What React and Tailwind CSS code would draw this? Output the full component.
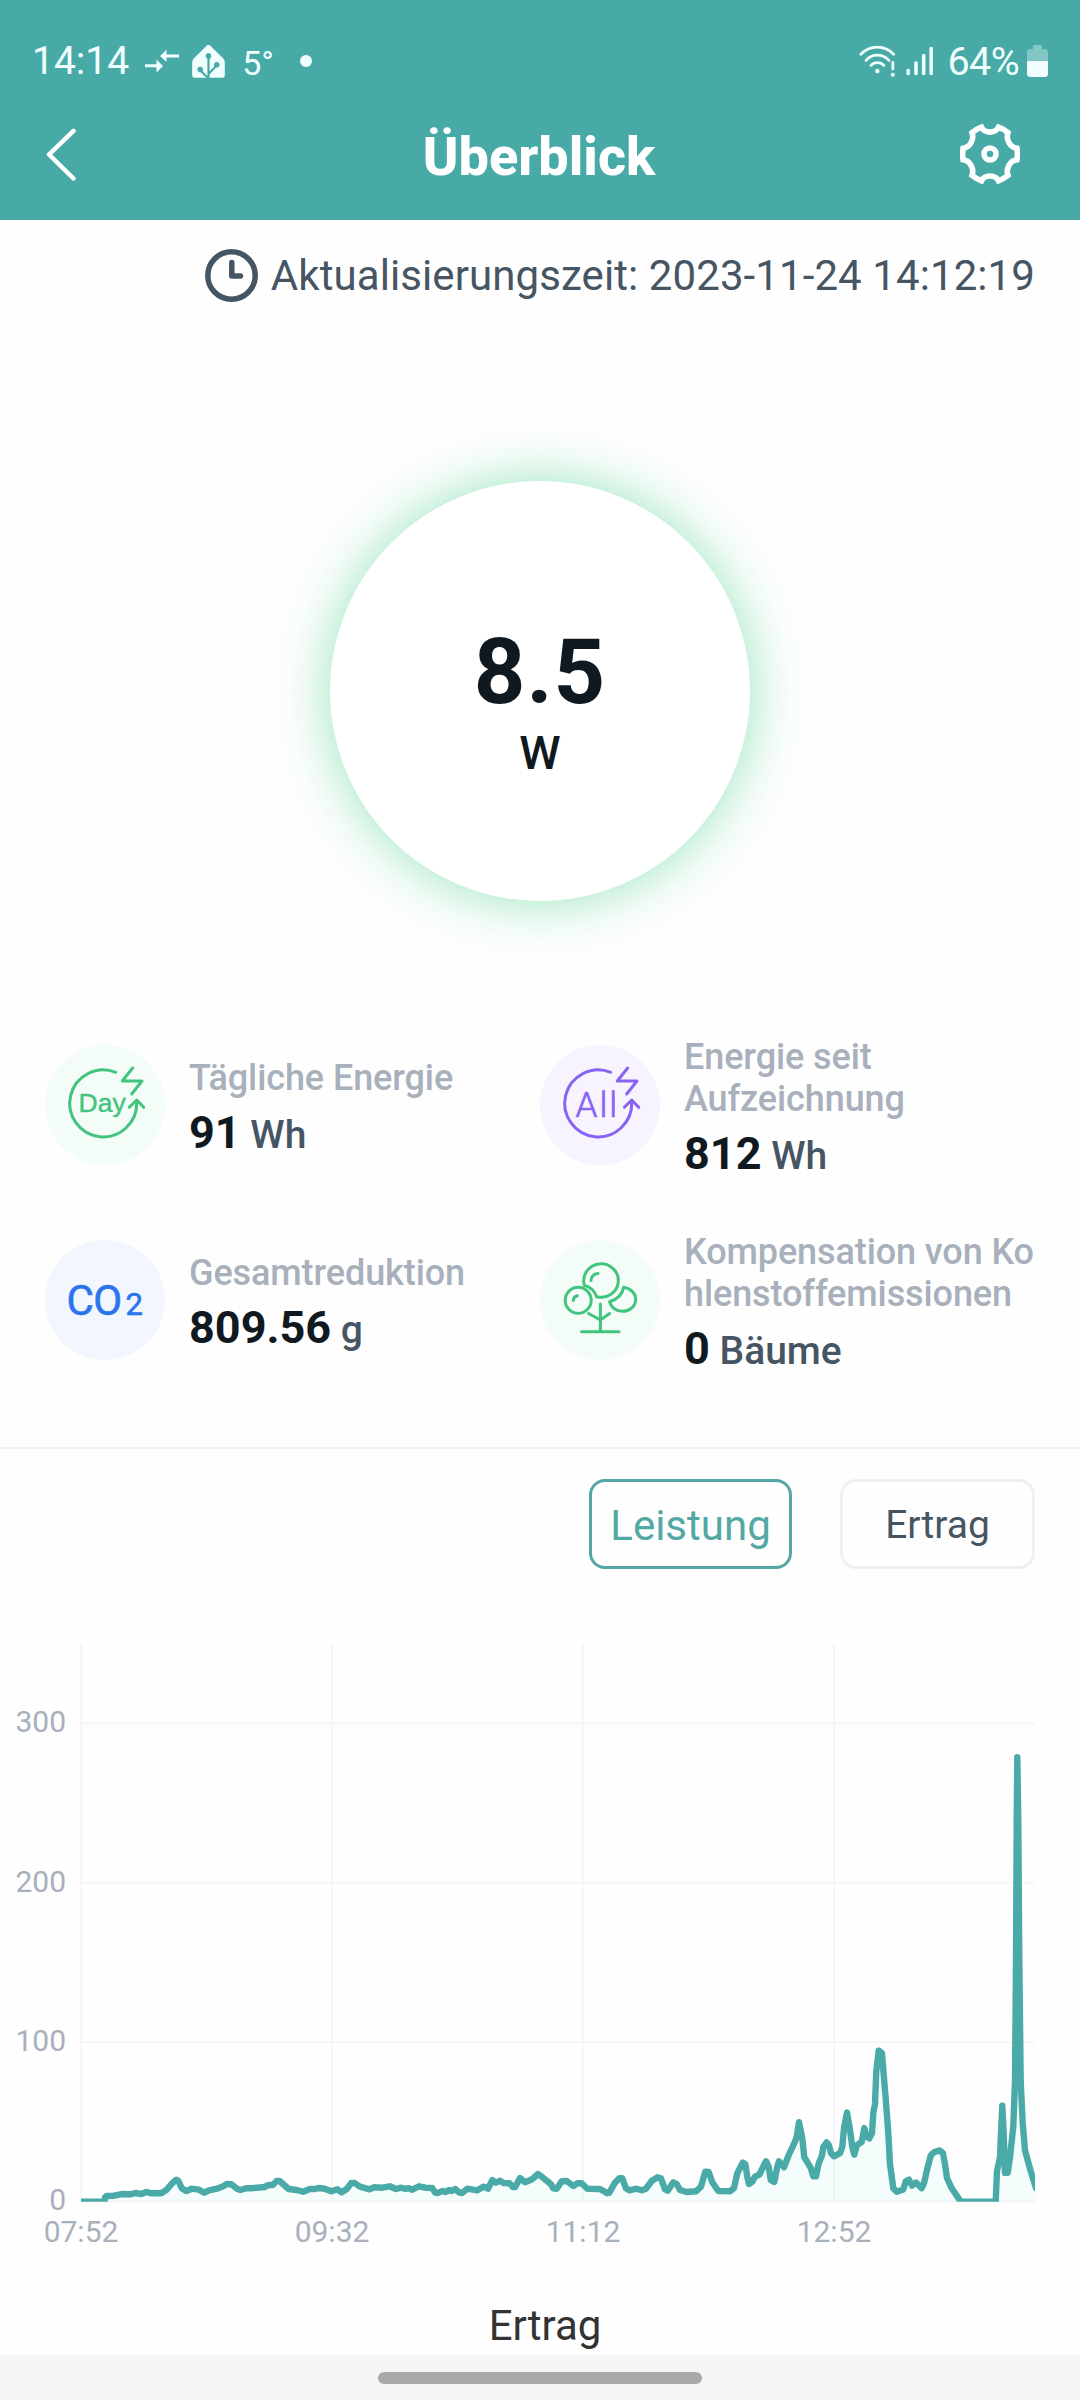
/**
 * Solar overview screen
 *
 * Current power, energy totals and the power curve of the day.
 */

const STATS = [
  {
    id: "daily",
    label: "Tägliche Energie",
    value: "91",
    unit: "Wh",
    bg: "bg-[#f3fcf7]",
    icon: <DayIcon />,
  },
  {
    id: "total",
    label: "Energie seit\nAufzeichnung",
    value: "812",
    unit: "Wh",
    bg: "bg-[#f7f4ff]",
    icon: <AllIcon />,
  },
  {
    id: "co2",
    label: "Gesamtreduktion",
    value: "809.56",
    unit: "g",
    bg: "bg-[#f1f6ff]",
    icon: <Co2Icon />,
  },
  {
    id: "trees",
    label: "Kompensation von Ko\nhlenstoffemissionen",
    value: "0",
    unit: "Bäume",
    bg: "bg-[#f3fcf7]",
    icon: <TreeIcon />,
  },
];

// ===== CHART DATA =====
const Y_TICKS = [
  { label: "300", y: 103.4 },
  { label: "200", y: 262.8 },
  { label: "100", y: 422.2 },
  { label: "0", y: 581.5 },
];

const X_TICKS = [
  { label: "07:52", x: 81 },
  { label: "09:32", x: 332 },
  { label: "11:12", x: 583 },
  { label: "12:52", x: 834 },
];

const POWER_LINE =
  "81,581.7 104.5,581.7 105,577.5 106.7,576 113.6,575.7 123,574 131,574.3 135.3,573 141.2,574 146.3,572 151.5,573.3 161.2,573.3 " +
  "166,570.3 172.2,563.3 176.3,559.7 178.4,561 181.8,568.3 186.3,571 191.5,568.7 199,569.7 204.2,572.7 209,570.3 " +
  "217,568.7 223.8,566 226.6,564 231.4,564.3 237,568.7 240.4,570 246.2,568.3 251.4,568.3 264.5,567 268.6,565 273,565 " +
  "276.5,561 279.6,561 288.6,569 296.8,570 303,571.7 310,569 315,569 318.5,568 324.7,568.7 331.3,571.3 337.5,569.3 " +
  "341.6,572.3 347.1,568.7 351.2,563 354.7,563 358.8,566 363.3,567.7 369.5,569.3 374.3,567.3 382.2,567.7 389.8,566.3 " +
  "396,569 401.2,567.7 404.6,568.7 409,568.3 412.2,569.7 419,566.3 425.3,567.7 432.2,568 435.3,572.7 437.3,573 " +
  "442.5,571 445.2,572 449.4,570 451.8,571 455.2,569 459.7,572.7 462,573 467.3,568.7 477,570.3 483.8,566.7 488,568.7 " +
  "492.4,560 495.9,562.7 500.3,560.7 503.4,563 509.6,563.3 513,567 515.2,567 520,558 525.1,562.3 532,559.3 538,554 " +
  "541.7,556.7 546.7,560.7 551,564.3 553.3,568.3 556.7,568.7 561.7,561.3 566.7,561 573.3,566 577.3,563.3 581.7,563.3 " +
  "587.3,568.7 600,569 607.3,573.3 609.3,572.7 615,562.7 619.3,558.3 622.3,558.3 626,568.3 629.3,570.3 636.7,568.7 " +
  "641.7,570.3 646,568.7 651.7,561 657.3,557.3 661,558.3 665,569.3 667.7,570.7 673.3,562.3 676.7,564 680,570 686.7,572 " +
  "696,571.3 701,566.7 705.3,551.7 708.7,552 712.3,562.3 718.3,571 730,571.3 734,568 737.3,553.3 742.7,542.7 745.3,544 " +
  "747.3,556.7 749,564 752.3,561.7 755,556.7 759.3,554.7 766,541.3 768.7,546.7 770.7,560 774.3,562 777.3,546.7 779,541.3 " +
  "784,547.3 788.3,536 795,521.7 796.7,516.7 799,502.2 802.3,518.4 804.3,537.3 810.7,547.7 813.3,556.3 816,556.3 " +
  "818.7,543.5 822,535.6 823.3,527 826.7,522.5 829,525.3 831,533.2 834,536.3 840,533.2 842.3,527 844,508.1 847,492.6 " +
  "850,509.8 852.3,527 854.3,534.6 856.7,525.3 861.7,521.8 864.3,508.1 866.7,516.7 869.3,518.4 872,513.2 873.3,492.6 " +
  "875,484 876.3,451.2 878.7,430.6 882,433.3 883.7,454.7 886,482.2 888.3,513.2 890,544.2 893.3,568.3 896.7,571.8 " +
  "903.3,569.4 905.7,561.4 909,559.7 912,565.6 916,562.5 921.7,568.3 924,563.2 926.7,551.1 930.7,535.6 934,532.2 " +
  "939.7,530.4 943,533.2 945,544.2 947,558 951.7,568.3 959.3,579.4 960,581.7 995.7,581.7 997,551.1 1000,537.3 " +
  "1001,513.2 1002.3,485.7 1003.7,513.2 1005,552.8 1007.7,552.8 1010,537.3 1013.3,506.3 1015,461.6 1016,341 " +
  "1016.7,203.3 1017.3,137.2 1018.3,203.3 1019.3,341 1020.7,461.6 1022.7,502.9 1025,530.4 1030.7,551.1 1036,568";

// ===== STATUS BAR ICONS =====
function ArrowsIcon() {
  return (
    <svg className="ml-4 h-6 w-[34px]" viewBox="0 0 34 24" fill="currentColor">
      <path d="M15 7 21.500.8V5.400H34v3H21.500V13zM0 15.200h11.500V10.600L18 17l-6.500 6.400V18.200H0z" />
    </svg>
  );
}

function HouseIcon() {
  return (
    <svg className="ml-[13px] h-[33px] w-[33px]" viewBox="0 0 33 33">
      <path
        fill="currentColor"
        d="M14.400.9a3 3 0 0 1 4.200 0L31.300 13.600a5 5 0 0 1 1.500 3.600V30.400a2.400 2.400 0 0 1-2.400 2.400H2.600A2.400 2.400 0 0 1 .2 30.400V17.200a5 5 0 0 1 1.500-3.600z"
      />
      <g fill="#48aaa7" stroke="#48aaa7">
        <path fill="none" strokeWidth="2.200" d="M16.500 11v22M16.500 29l8-8.500M16 33 8.500 25.500" />
        <circle cx="16.500" cy="11" r="2.400" />
        <circle cx="24.800" cy="19.800" r="2.400" />
        <circle cx="8.200" cy="24.500" r="2.400" />
      </g>
    </svg>
  );
}

function WifiIcon() {
  return (
    <svg className="h-[34px] w-[37px]" viewBox="0 0 37 34" fill="none" stroke="currentColor" strokeLinecap="round">
      <g strokeWidth="2.800">
        <path d="M1.800 10.300C10.500.6 26 .6 34.700 10.300" />
        <path d="M7 16.400C13 9.400 23.500 9.400 30 16.400" />
        <path d="M12 21.400c3.500-3.700 9.300-3.700 12.800 0" />
        <path d="M33.800 18.500v6.500" />
      </g>
      <circle cx="18.300" cy="27" r="2.200" fill="currentColor" stroke="none" />
      <circle cx="33.800" cy="30.800" r="2" fill="currentColor" stroke="none" />
    </svg>
  );
}

function SignalIcon() {
  return (
    <svg
      className="ml-2.5 h-[31px] w-[27px]"
      viewBox="0 0 27 31"
      stroke="currentColor"
      strokeWidth="3.600"
      strokeLinecap="round"
    >
      <path d="M2.200 24.500v3M10 17v10.500M17.700 9.500v18M25.200 2.500v25" />
    </svg>
  );
}

function BatteryIcon() {
  return (
    <svg className="ml-2 h-8 w-[21px]" viewBox="0 0 21 32" fill="currentColor">
      <path
        opacity=".35"
        d="M6 1.500A1.500 1.500 0 0 1 7.500 0h6A1.500 1.500 0 0 1 15 1.500V4h2.500A3.500 3.500 0 0 1 21 7.500V16H0V7.500A3.500 3.500 0 0 1 3.500 4H6z"
      />
      <path d="M0 16h21v12.500a3.500 3.500 0 0 1-3.500 3.500h-14A3.500 3.500 0 0 1 0 28.500z" />
    </svg>
  );
}

// ===== HEADER ICONS =====
function BackIcon() {
  return (
    <svg
      className="h-[53px] w-[30px]"
      viewBox="0 0 30 53"
      fill="none"
      stroke="currentColor"
      strokeWidth="4.500"
      strokeLinecap="round"
      strokeLinejoin="round"
    >
      <path d="M27.500 2.800 3 26.500 27.500 50.500" />
    </svg>
  );
}

function GearIcon() {
  return (
    <svg className="h-[60px] w-[60px]" viewBox="0 0 60 60" fill="none" stroke="currentColor" strokeWidth="5.600">
      <path d="M21.500 3.200C24.500 9.700 35.500 9.700 38.500 3.200Q43.500 5 48 8.600C45.500 15.500 50 23.500 56.900 24.300Q57.900 30 56.900 35.700C50 36.500 45.500 44.500 48 51.400Q43.500 55 38.500 56.800C35.500 50.300 24.500 50.300 21.500 56.800Q16.500 55 12 51.400C14.500 44.500 10 36.500 3.100 35.700Q2.100 30 3.100 24.300C10 23.500 14.500 15.500 12 8.600Q16.500 5 21.500 3.200Z" />
      <circle cx="30" cy="30" r="6" />
    </svg>
  );
}

function ClockIcon() {
  return (
    <svg
      className="h-[53px] w-[53px]"
      viewBox="0 0 53 53"
      fill="none"
      stroke="currentColor"
      strokeWidth="5.500"
      strokeLinecap="round"
      strokeLinejoin="round"
    >
      <circle cx="26.500" cy="26.500" r="23.700" />
      <path strokeWidth="5.500" d="M26.800 13.500V27H35.500" />
    </svg>
  );
}

// ===== STAT ICONS =====
function CycleArrow() {
  return (
    <g fill="none" stroke="currentColor" strokeWidth="3" strokeLinecap="round" strokeLinejoin="round">
      <path d="M70.700 27.300A33.500 33.500 0 1 0 91.700 57" />
      <path d="M84.300 62.300 91.700 55l7 7.300" />
      <path d="M87.700 23 77.300 36H97L86.700 49" />
    </g>
  );
}

function DayIcon() {
  return (
    <svg className="h-full w-full text-[#42c47f]" viewBox="0 0 120 120">
      <CycleArrow />
      <text
        x="33.500"
        y="67"
        fill="currentColor"
        stroke="currentColor"
        strokeWidth=".4"
        className="font-['Liberation_Sans',sans-serif] text-[26.5px]"
      >
        Day
      </text>
    </svg>
  );
}

function AllIcon() {
  return (
    <svg className="h-full w-full text-[#8a63f4]" viewBox="0 0 120 120">
      <CycleArrow />
      <text
        x="35.500"
        y="71.500"
        fill="currentColor"
        stroke="currentColor"
        strokeWidth=".7"
        className="text-[35px] font-light tracking-[2px]"
      >
        All
      </text>
    </svg>
  );
}

function Co2Icon() {
  return (
    <svg className="h-full w-full text-[#2a75ec]" viewBox="0 0 120 120" fill="currentColor">
      <g stroke="currentColor" strokeWidth=".6">
        <text x="21.500" y="74.500" className="text-[42px] tracking-[-0.5px]">
          CO
        </text>
        <text x="80.500" y="74.500" className="text-[31px]">
          2
        </text>
      </g>
    </svg>
  );
}

function TreeIcon() {
  return (
    <svg
      className="h-full w-full text-[#42c47f]"
      viewBox="0 0 120 120"
      fill="none"
      stroke="currentColor"
      strokeWidth="3"
      strokeLinecap="round"
      strokeLinejoin="round"
    >
      <path d="M44.500 45.500A17.300 16.700 0 1 1 56.500 56.700C55 51.500 50.500 46.500 44.500 45.500Z" />
      <circle cx="38.200" cy="60.300" r="13" />
      <path d="M83.600 47.300C91 48.500 95.700 53.500 95.700 59.300C95.700 66.500 89.500 71.300 82.500 71.300C76.500 71.300 71 67.500 69.600 61.700C77 59.500 82.500 54.500 83.600 47.300Z" />
      <path d="M51 40.500c.3-3.800 3-6.600 7-7M33.300 60.500c.2-2.500 1.700-4.300 4-4.800" />
      <path d="M60.400 64v27.700M41.500 91.700H79M48.600 73.500 60.400 80l9.200-6.500" />
    </svg>
  );
}

// ===== SECTIONS =====
function StatusBar() {
  return (
    <div className="flex h-[122px] items-center pl-8 pr-8 text-[#f0fffd]">
      <span className="pt-px text-[39px]">14:14</span>
      <ArrowsIcon />
      <HouseIcon />
      <span className="ml-[17px] pt-1 text-[34px]">5°</span>
      <span className="ml-[26px] h-3 w-3 rounded-full bg-current" />
      <div className="ml-auto flex items-center">
        <WifiIcon />
        <SignalIcon />
        <span className="ml-3.5 pt-px text-[39.5px] tracking-[-0.6px]">64%</span>
        <BatteryIcon />
      </div>
    </div>
  );
}

function Header() {
  return (
    <header className="h-[220px] bg-[#48aaa7] text-white">
      <StatusBar />
      <div className="flex h-16 items-center justify-between pl-[46px] pr-[60px]">
        <BackIcon />
        <h1 className="pl-[42px] pt-1.5 text-[54px] font-extrabold leading-[60px]">Überblick</h1>
        <GearIcon />
      </div>
    </header>
  );
}

function StatCell({ stat }) {
  return (
    <div className="flex h-[120px] items-center">
      <div className={`h-[120px] w-[120px] shrink-0 rounded-full ${stat.bg}`}>{stat.icon}</div>
      <div className="ml-6 whitespace-pre pt-1 font-medium">
        <p className="text-[36px] leading-[42px] tracking-[-0.1px] text-[#a8b0bc]">{stat.label}</p>
        <p className="mt-[11px] text-[39px] leading-[46px] text-[#465563]">
          <span className="text-[45px] font-bold text-[#101920]">{stat.value}</span> {stat.unit}
        </p>
      </div>
    </div>
  );
}

function PowerChart() {
  return (
    <svg className="mt-[51px] block h-[640px] w-[1080px] shrink-0" viewBox="0 0 1080 640">
      <clipPath id="plot">
        <rect x="81" y="20" width="954" height="561.700" />
      </clipPath>

      <g stroke="#f3f4f5" strokeWidth="1.600">
        {Y_TICKS.map((tick) => (
          <line key={tick.label} x1="81" x2="1035" y1={tick.y} y2={tick.y} />
        ))}
        {X_TICKS.map((tick) => (
          <line key={tick.label} x1={tick.x} x2={tick.x} y1="24" y2="582" />
        ))}
      </g>

      <g clipPath="url(#plot)">
        <polygon points={`${POWER_LINE} 1036,582 81,582`} fill="#48dcdc" fillOpacity=".05" />
        <polyline
          points={POWER_LINE}
          fill="none"
          stroke="#4aaaa7"
          strokeWidth="6.400"
          strokeLinecap="round"
          strokeLinejoin="round"
        />
      </g>

      <g fill="#a8b0bc" className="text-[30px]">
        {Y_TICKS.map((tick) => (
          <text key={tick.label} x="66" y={tick.y + 8.8} textAnchor="end">
            {tick.label}
          </text>
        ))}
        {X_TICKS.map((tick) => (
          <text key={tick.label} x={tick.x} y="622" textAnchor="middle">
            {tick.label}
          </text>
        ))}
      </g>
    </svg>
  );
}

export default function App() {
  return (
    <div className="flex h-[2400px] w-[1080px] flex-col overflow-hidden bg-[#fefefe] font-['Roboto',sans-serif]">
      <Header />

      <div className="flex h-[110px] items-center justify-end gap-[13px] pr-[45px] text-[#465563]">
        <ClockIcon />
        <span className="text-[42px] tracking-[0.09px]">Aktualisierungszeit: 2023-11-24 14:12:19</span>
      </div>

      {/* Current power */}
      <div className="mt-[151px] flex h-[420px] w-[420px] shrink-0 flex-col items-center self-center rounded-full bg-white pt-[139px] text-[#101920] shadow-[0_0_54px_rgba(60,205,130,0.53)]">
        <span className="text-[90px] font-bold leading-[105px] tracking-[1px]">8.5</span>
        <span className="text-[47px] font-medium leading-[56px]">W</span>
      </div>

      <div className="mt-36 grid grid-cols-2 gap-y-[75px] pl-[45px] pr-[45px]">
        {STATS.map((stat) => (
          <StatCell key={stat.id} stat={stat} />
        ))}
      </div>

      <div className="mt-[87px] h-0.5 shrink-0 bg-[#eeeff0]" />

      <div className="mt-[30px] flex justify-end gap-12 pr-[45px]">
        <button className="h-[90px] w-[203px] rounded-[16px] border-3 border-[#53a8a4] pt-0.5 text-[42px] text-[#53a8a4]">
          Leistung
        </button>
        <button className="h-[90px] w-[195px] rounded-[16px] border-3 border-[#eff0f1] pt-[3px] text-[39px] text-[#465563]">
          Ertrag
        </button>
      </div>

      <PowerChart />

      <h2 className="mt-[41px] pl-2.5 text-center text-[42px] leading-[50px] text-[#333333]">Ertrag</h2>

      <div className="mt-auto flex h-[45px] shrink-0 justify-center bg-[#f5f5f5] pt-[17px]">
        <div className="h-3 w-[324px] rounded-full bg-[#a9a9a9]" />
      </div>
    </div>
  );
}
